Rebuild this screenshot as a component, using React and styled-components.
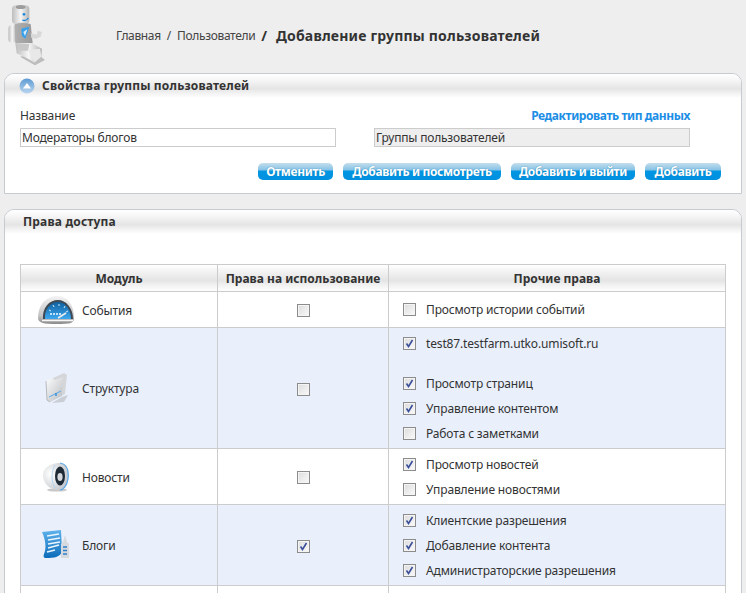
import React from 'react'
import styled, { createGlobalStyle } from 'styled-components'

const GlobalStyle = createGlobalStyle`
    html, body {
        margin: 0;
        height: 593px;
        overflow: hidden;
        background: #eeeeee;
    }
    body {
        font-family: "Noto Sans", "Liberation Sans", sans-serif;
        font-size: 12px;
        letter-spacing: -0.15px;
        color: #333;
    }
`

const Page = styled.div`
    width: 746px;
    height: 593px;
    overflow: hidden;
`

const Header = styled.div`
    height: 73px;
    display: flex;
    align-items: flex-start;
`

const Crumbs = styled.div`
    display: flex;
    align-items: center;
    height: 24px;
    margin: 23px 0 0 46px;
    white-space: nowrap;
`

const Crumb = styled.span`
    color: #444;
    font-size: 12px;
    letter-spacing: -0.35px;
`

const Slash = styled.span`
    margin: 0 6px;
    color: #444;
    font-size: 12px;
`

const BigSlash = styled.span`
    margin: 0 9px 0 6px;
    font-weight: bold;
    font-size: 14px;
    color: #333;
`

const PageTitle = styled.h1`
    margin: 0;
    font-size: 14px;
    font-weight: bold;
    letter-spacing: 0.2px;
    color: #333;
`

const Panel = styled.section`
    margin: 0 4px 15px 4px;
    background: #fff;
    border: 1px solid #c5cbd0;
    border-radius: 10px 10px 0 0;
    box-sizing: border-box;
    height: ${props => props.$height};
    overflow: hidden;
`

const PanelHead = styled.div`
    height: 24px;
    display: flex;
    align-items: flex-start;
    gap: 7px;
    padding: 4px 0 0 ${props => props.$left};
    box-sizing: border-box;
    background: linear-gradient(#fff 0, #f8f8f8 5px, #e4e4e4 15px, #ececec 17px, #fff 24px);
`

const PanelTitle = styled.h2`
    margin: 0;
    font-size: 12px;
    line-height: 16px;
    font-weight: bold;
    letter-spacing: 0.18px;
    color: #333;
`

const FormRow = styled.div`
    display: flex;
    gap: 38px;
    padding: 8px 0 0 15px;
`

const Field = styled.div`
    width: 316px;
    display: flex;
    flex-direction: column;
`

const FieldHead = styled.div`
    height: 22px;
    line-height: 20px;
    display: flex;
    justify-content: ${props => props.$right ? 'flex-end' : 'flex-start'};
    align-items: flex-start;
`

const Label = styled.span`
    font-size: 12px;
    color: #333;
`

const TypeLink = styled.a`
    font-size: 12px;
    font-weight: bold;
    letter-spacing: -0.42px;
    color: #1b8ee6;
`

const Input = styled.input`
    width: 316px;
    height: 19px;
    box-sizing: border-box;
    padding: 0 1px;
    border: 1px solid #cccccc;
    background: ${props => props.disabled ? '#eeeeee' : '#fff'};
    font: 12px "Noto Sans", "Liberation Sans", sans-serif;
    letter-spacing: -0.2px;
    color: #333;
    outline: none;
    &:disabled {
        color: #333;
    }
`

const Actions = styled.div`
    display: flex;
    justify-content: flex-end;
    gap: 10px;
    padding: 16px 20px 0 0;
`

const ActionButton = styled.button`
    height: 17px;
    width: ${props => props.$width}px;
    padding: 0;
    border: 0;
    border-radius: 5px;
    background: linear-gradient(#c4deec 0, #86c2e6 7px, #0096e2 8px, #0090e0 100%);
    color: #fff;
    font: bold 12px/17px "Noto Sans", "Liberation Sans", sans-serif;
    letter-spacing: -0.35px;
    text-shadow: 0 0 1px #0a6ea8;
    white-space: nowrap;
`

const RightsBody = styled.div`
    padding: 30px 14px 0 15px;
`

const Table = styled.table`
    width: 706px;
    table-layout: fixed;
    border-collapse: collapse;
    border: 1px solid #cccccc;
`

const Th = styled.th`
    height: 26px;
    padding: 0;
    border: 1px solid #cccccc;
    background: linear-gradient(#fff 0, #f6f6f6 4px, #e4e4e4 15px, #f0f0f0 19px, #fff 26px);
    font-size: 12px;
    font-weight: bold;
    letter-spacing: 0;
    color: #333;
    width: ${props => props.$width}px;
`

const Row = styled.tr`
    background: ${props => props.$tinted ? '#e9f0fc' : '#fff'};
    height: ${props => props.$height}px;
`

const Td = styled.td`
    padding: 0;
    border: 1px solid #cccccc;
    vertical-align: middle;
    text-align: ${props => props.$center ? 'center' : 'left'};
`

const ModuleCell = styled.div`
    display: flex;
    align-items: center;
    padding-left: 15px;
`

const IconSlot = styled.div`
    width: 46px;
    height: 32px;
    padding-right: 6px;
    box-sizing: border-box;
    display: flex;
    justify-content: center;
    align-items: center;
    flex: none;
`

const ModuleName = styled.span`
    font-size: 12px;
    padding-top: 1px;
    color: #333;
`

const RightsList = styled.div`
    display: flex;
    flex-direction: column;
    padding: 0 0 0 14px;
`

const RightItem = styled.div`
    display: flex;
    align-items: center;
    gap: 10px;
    height: 25px;
    margin-bottom: ${props => props.$gap || 0}px;
    font-size: 12px;
    color: #333;
`

const Box = styled.span`
    width: 13px;
    height: 13px;
    box-sizing: border-box;
    display: inline-flex;
    align-items: center;
    justify-content: center;
    vertical-align: middle;
    border: 1px solid #8c8c8c;
    box-shadow: inset 0 0 0 1px #f4f4f4;
    background: linear-gradient(135deg, #dcdcdc, #fafafa);
`

const Soft = styled.svg`
    filter: blur(0.3px);
    flex: none;
`

function Check({ on }) {
    return (
        <Box>
            {on && (
                <svg width="9" height="9" viewBox="0 0 9 9">
                    <path d="M1.5 4.5 L3.5 7.5 L7.5 1" fill="none" stroke="#3a4f9c" strokeWidth="1.6" />
                </svg>
            )}
        </Box>
    )
}

function RobotLogo() {
    return (
        <Soft width="70" height="70" viewBox="0 0 210 210">
            <defs>
                <linearGradient id="rb" x1="0" x2="1" y1="0" y2="0">
                    <stop offset="0" stopColor="#bdbdbd" />
                    <stop offset="0.5" stopColor="#f6f6f6" />
                    <stop offset="1" stopColor="#b4b4b4" />
                </linearGradient>
                <linearGradient id="rt" x1="0" x2="1" y1="0" y2="0">
                    <stop offset="0" stopColor="#b0b0b0" />
                    <stop offset="1" stopColor="#9a9a9a" />
                </linearGradient>
            </defs>
            <path d="M60 170 L110 160 L135 180 L105 196 Z" fill="#bcbcbc" />
            <rect x="36" y="16" width="52" height="56" rx="12" fill="url(#rb)" />
            <ellipse cx="62" cy="21" rx="15" ry="6" fill="#9c9c9c" />
            <circle cx="72" cy="43" r="4" fill="#1c88dc" />
            <path d="M67 60 Q78 65 85 54" stroke="#1c88dc" strokeWidth="4" fill="none" />
            <rect x="54" y="68" width="28" height="8" fill="#d0d0d0" />
            <rect x="25" y="76" width="24" height="52" rx="10" fill="url(#rb)" />
            <path d="M44 72 Q70 66 92 72 L98 130 H46 Z" fill="url(#rt)" />
            <path d="M64 86 L88 80 L76 116 L66 108 Z" fill="#38a0ea" />
            <path d="M70 96 L82 88 L75 108 Z" fill="#d8eefc" />
            <path d="M92 100 L110 104 L113 92 L126 96 L122 110 L108 116 L94 114 Z" fill="#d8d8d8" />
            <path d="M46 130 H96 L126 146 L124 172 L104 188 L84 176 L50 160 Z" fill="url(#rb)" />
            <path d="M84 150 L120 146 L124 170 L104 186 Z" fill="#e8e8e8" />
            <path d="M50 132 H88 L84 152 H56 Z" fill="#c8c8c8" />
        </Soft>
    )
}

function SectionToggle() {
    return (
        <svg width="16" height="16" viewBox="0 0 16 16">
            <defs>
                <linearGradient id="tg" x1="0" x2="0" y1="0" y2="1">
                    <stop offset="0" stopColor="#5d9bd4" />
                    <stop offset="1" stopColor="#bcd6ee" />
                </linearGradient>
            </defs>
            <circle cx="8" cy="8" r="7.5" fill="url(#tg)" />
            <path d="M4 10.5 L8 5 L12 10.5 Z" fill="#fff" />
        </svg>
    )
}

function GaugeIcon() {
    return (
        <Soft width="38" height="30" viewBox="0 0 38 30">
            <defs>
                <linearGradient id="gb" x1="0" x2="0" y1="0" y2="1">
                    <stop offset="0" stopColor="#f4f4f4" />
                    <stop offset="0.7" stopColor="#c4c4c4" />
                    <stop offset="1" stopColor="#8a8a8a" />
                </linearGradient>
                <linearGradient id="gf" x1="0" x2="0" y1="0" y2="1">
                    <stop offset="0" stopColor="#10609e" />
                    <stop offset="1" stopColor="#3ca8f0" />
                </linearGradient>
            </defs>
            <path d="M1 23 C1 9 10 1 20 1 C30 1 37 9 37 23 C37 28 34 29 20 29 C7 29 1 28 1 23 Z" fill="url(#gb)" />
            <path d="M6 24 C5 13 12 5 21 5 C29 5 36 13 36 24 Z" fill="#3d4a55" />
            <path d="M8 24 C7 14 14 7 21 7 C28 7 34 14 34 24 Z" fill="url(#gf)" />
            <path d="M12 15 L14 16 M16 10 L17 12 M22 9 V11 M28 11 L27 13 M31 16 L29 17" stroke="#d4ecfc" strokeWidth="1" />
            <path d="M13 19 H24" stroke="#bfe2fa" strokeWidth="2" strokeDasharray="2 1" />
            <path d="M21 23 L29 18" stroke="#ececec" strokeWidth="1.6" />
            <path d="M5 25.5 H36" stroke="#f6f6f6" strokeWidth="1.5" />
        </Soft>
    )
}

function FolderIcon() {
    return (
        <Soft width="24" height="30" viewBox="0 0 24 30">
            <defs>
                <linearGradient id="fl" x1="0" x2="1" y1="0" y2="1">
                    <stop offset="0" stopColor="#fdfdfd" />
                    <stop offset="1" stopColor="#b8bcc0" />
                </linearGradient>
            </defs>
            <path d="M18 24 L8 30 L20 29 L24 22 Z" fill="#c9ced4" />
            <path d="M7 6 L20 0 L23 2 L21 21 L9 27 Z" fill="#d4d6d9" />
            <path d="M2 8 L8 5 L11 7 L19 4 L18 23 L6 29 L3 27 Z" fill="url(#fl)" />
            <path d="M2 8 L3 27 L6 29" fill="none" stroke="#a8acb0" strokeWidth="0.8" />
            <path d="M5 24 L17 18" stroke="#5aa8ea" strokeWidth="1" />
            <path d="M12 20 V23" stroke="#2f8ad8" strokeWidth="1.4" />
        </Soft>
    )
}

function SpeakerIcon() {
    return (
        <Soft width="28" height="30" viewBox="0 0 28 30">
            <defs>
                <radialGradient id="sp" cx="0.3" cy="0.4" r="0.8">
                    <stop offset="0" stopColor="#ffffff" />
                    <stop offset="1" stopColor="#bcc0c6" />
                </radialGradient>
            </defs>
            <ellipse cx="15" cy="28" rx="10" ry="1.6" fill="#c8c8c8" />
            <path d="M1 13 C1 6 8 1 18 1 C25 2 27 9 26 17 C25 24 21 28 15 28 C6 27 1 20 1 13 Z" fill="url(#sp)" />
            <path d="M18 1 C25 2 27 9 26 17 C25 24 21 28 18 28" fill="none" stroke="#5aa8e6" strokeWidth="1.2" />
            <path d="M13 3 C9 9 9 20 13 26" fill="none" stroke="#a4cdf0" strokeWidth="0.8" />
            <ellipse cx="18" cy="14" rx="5" ry="9.5" fill="#1d2a36" />
            <ellipse cx="18" cy="15" rx="2.6" ry="4" fill="#d4d8dc" />
        </Soft>
    )
}

function BlogIcon() {
    return (
        <Soft width="28" height="30" viewBox="0 0 28 30">
            <defs>
                <linearGradient id="bl" x1="0" x2="0" y1="0" y2="1">
                    <stop offset="0" stopColor="#5fb2ec" />
                    <stop offset="1" stopColor="#0c6cba" />
                </linearGradient>
            </defs>
            <path d="M0 2 L19 0 L20 22 C18 27 12 28 4 28 C2 28 1 27 2 24 C5 18 3 8 0 2 Z" fill="url(#bl)" />
            <path d="M5 6 L17 4 M6 10 L18 8 M6 14 L18 12 M6 18 L17 15 M5 22 L13 20" stroke="#eaf5fd" strokeWidth="1.5" />
            <path d="M23 5 L25 12 L27 14 V28 H19 V14 L21 12 Z" fill="#d6dade" />
            <path d="M21 17 H25 M21 20.5 H25 M21 24 H25" stroke="#2c7fcc" strokeWidth="1.6" />
        </Soft>
    )
}

const modules = [
    {
        name: 'События', icon: <GaugeIcon />, height: 36, used: false,
        rights: [{ text: 'Просмотр истории событий' }],
    },
    {
        name: 'Структура', icon: <FolderIcon />, height: 121, used: false, tinted: true,
        rights: [
            { text: 'test87.testfarm.utko.umisoft.ru', on: true, gap: 15 },
            { text: 'Просмотр страниц', on: true },
            { text: 'Управление контентом', on: true },
            { text: 'Работа с заметками' },
        ],
    },
    {
        name: 'Новости', icon: <SpeakerIcon />, height: 56, used: false,
        rights: [
            { text: 'Просмотр новостей', on: true },
            { text: 'Управление новостями' },
        ],
    },
    {
        name: 'Блоги', icon: <BlogIcon />, height: 81, used: true, tinted: true,
        rights: [
            { text: 'Клиентские разрешения', on: true },
            { text: 'Добавление контента', on: true },
            { text: 'Администраторские разрешения', on: true },
        ],
    },
    { name: '', height: 56, used: false, rights: [] },
]

export default function App() {
    return (
        <Page>
            <GlobalStyle />
            <Header>
                <RobotLogo />
                <Crumbs>
                    <Crumb>Главная</Crumb>
                    <Slash>/</Slash>
                    <Crumb>Пользователи</Crumb>
                    <BigSlash>/</BigSlash>
                    <PageTitle>Добавление группы пользователей</PageTitle>
                </Crumbs>
            </Header>
            <Panel $height="121px">
                <PanelHead $left="14px">
                    <SectionToggle />
                    <PanelTitle>Свойства группы пользователей</PanelTitle>
                </PanelHead>
                <FormRow>
                    <Field>
                        <FieldHead><Label>Название</Label></FieldHead>
                        <Input defaultValue="Модераторы блогов" />
                    </Field>
                    <Field>
                        <FieldHead $right><TypeLink>Редактировать тип данных</TypeLink></FieldHead>
                        <Input disabled defaultValue="Группы пользователей" />
                    </Field>
                </FormRow>
                <Actions>
                    <ActionButton $width={75}>Отменить</ActionButton>
                    <ActionButton $width={158}>Добавить и посмотреть</ActionButton>
                    <ActionButton $width={124}>Добавить и выйти</ActionButton>
                    <ActionButton $width={76}>Добавить</ActionButton>
                </Actions>
            </Panel>
            <Panel $height="400px">
                <PanelHead $left="18px">
                    <PanelTitle>Права доступа</PanelTitle>
                </PanelHead>
                <RightsBody>
                    <Table>
                        <thead>
                            <tr>
                                <Th $width={196}>Модуль</Th>
                                <Th $width={170}>Права на использование</Th>
                                <Th>Прочие права</Th>
                            </tr>
                        </thead>
                        <tbody>
                            {modules.map((m, i) => (
                                <Row key={i} $tinted={m.tinted} $height={m.height}>
                                    <Td>
                                        {m.name && (
                                            <ModuleCell>
                                                <IconSlot>{m.icon}</IconSlot>
                                                <ModuleName>{m.name}</ModuleName>
                                            </ModuleCell>
                                        )}
                                    </Td>
                                    <Td $center>{m.name && <Check on={m.used} />}</Td>
                                    <Td>
                                        <RightsList>
                                            {m.rights.map(r => (
                                                <RightItem key={r.text} $gap={r.gap}>
                                                    <Check on={r.on} />
                                                    {r.text}
                                                </RightItem>
                                            ))}
                                        </RightsList>
                                    </Td>
                                </Row>
                            ))}
                        </tbody>
                    </Table>
                </RightsBody>
            </Panel>
        </Page>
    )
}
